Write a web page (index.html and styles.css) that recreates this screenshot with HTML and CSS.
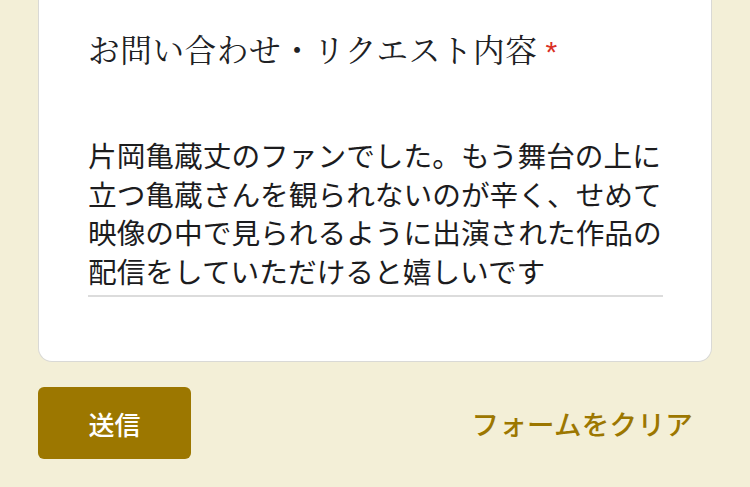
FILE: index.html
```html
<!DOCTYPE html>
<html lang="ja">
<head>
<meta charset="utf-8">
<link rel="stylesheet" href="styles.css">
</head>
<body>
<main class="page">
  <section class="card">
    <div class="label">お問い合わせ・リクエスト内容<span class="req">*</span></div>
    <div class="field">片岡亀蔵丈のファンでした。もう舞台の上に立つ亀蔵さんを観られないのが辛く、せめて映像の中で見られるように出演された作品の配信をしていただけると嬉しいです</div>
  </section>
  <div class="actions">
    <button class="submit" type="button">送信</button>
    <a class="clear" href="#">フォームをクリア</a>
  </div>
</main>
</body>
</html>
```
FILE: styles.css
```css
html, body {
  margin: 0;
  padding: 0;
  background: #f3efd7;
}
body {
  font-family: "Noto Sans CJK JP", "Noto Sans", sans-serif;
  color: #212121;
}
.page {
  width: 750px;
  height: 487px;
  overflow: hidden;
}
.card {
  margin-left: 38px;
  width: 623px;
  background: #ffffff;
  border: 1px solid #d9d9d6;
  border-top: none;
  border-radius: 0 0 14px 14px;
  padding: 29px 0 64px 49px;
}
.label {
  font-family: "Noto Serif CJK JP", "IPAexMincho", "IPAMincho", "Noto Sans CJK JP", serif;
  font-size: 31.6px;
  line-height: 40px;
  color: #202124;
  letter-spacing: 0.6px;
}
.req {
  color: #d93025;
  margin-left: 8px;
  font-size: 30px;
  font-family: "Liberation Sans", sans-serif;
}
.field {
  margin-top: 64px;
  width: 575px;
  font-size: 28.7px;
  line-height: 38.5px;
  color: #1c1c1e;
  padding-bottom: 5px;
  border-bottom: 2px solid #dcdcdc;
}
.actions {
  display: flex;
  justify-content: space-between;
  align-items: center;
  margin-top: 25px;
  padding: 0 57px 0 38px;
}
.submit {
  width: 153px;
  height: 72px;
  border: none;
  border-radius: 6px;
  background: #9c7700;
  color: #ffffff;
  font-family: "Noto Sans CJK JP", sans-serif;
  font-size: 26px;
  font-weight: 500;
  padding: 0;
}
.clear {
  color: #9c7700;
  text-decoration: none;
  font-size: 27.5px;
  font-weight: 500;
  letter-spacing: 0.3px;
}
```
